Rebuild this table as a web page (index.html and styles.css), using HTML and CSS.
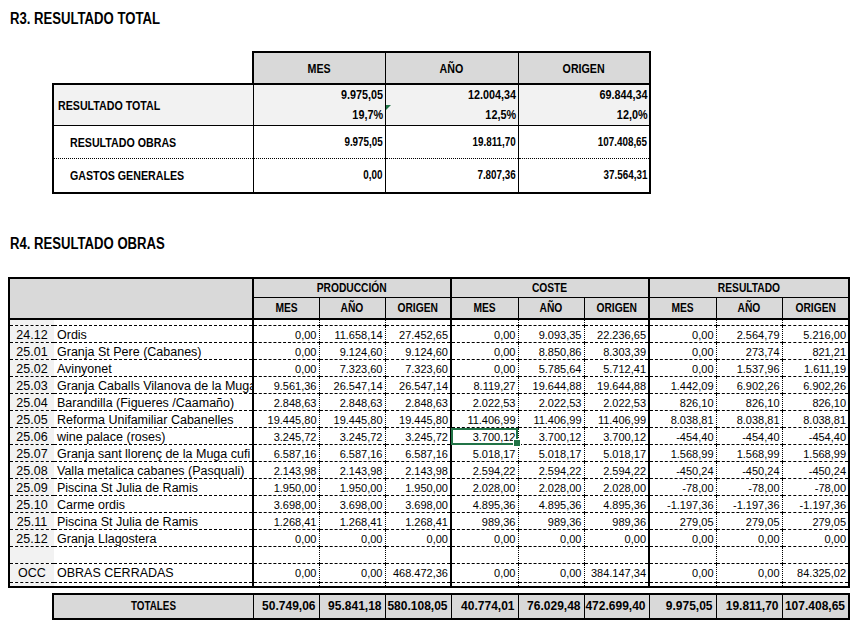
FILE: index.html
```html
<!DOCTYPE html>
<html lang="es">
<head>
  <meta charset="UTF-8">
  <meta name="viewport" content="width=device-width, initial-scale=1.0">
  <title>Resultado</title>
  <link rel="stylesheet" href="styles.css">
</head>
<body>

  <div class="page">

    <!-- R3 -->
    <h2 class="sec-title"><span class="nw">R3. RESULTADO TOTAL</span></h2>
    <table class="tbl-total">
      <colgroup>
        <col class="c-label">
        <col class="c-val">
        <col class="c-val2">
        <col class="c-val">
      </colgroup>
      <thead>
        <tr>
          <th class="blank"></th>
          <th><span class="nw">MES</span></th>
          <th><span class="nw">AÑO</span></th>
          <th><span class="nw">ORIGEN</span></th>
        </tr>
      </thead>
      <tbody>
        <tr class="row-main">
          <td class="lab"><span class="nw">RESULTADO TOTAL</span></td>
          <td class="val"><span class="line">9.975,05</span><span class="line">19,7%</span></td>
          <td class="val flag"><span class="line">12.004,34</span><span class="line">12,5%</span></td>
          <td class="val"><span class="line">69.844,34</span><span class="line">12,0%</span></td>
        </tr>
        <tr class="row-sub">
          <td class="lab sub"><span class="nw">RESULTADO OBRAS</span></td>
          <td class="val"><span class="nw">9.975,05</span></td>
          <td class="val"><span class="nw">19.811,70</span></td>
          <td class="val"><span class="nw">107.408,65</span></td>
        </tr>
        <tr class="row-sub last">
          <td class="lab sub"><span class="nw">GASTOS GENERALES</span></td>
          <td class="val"><span class="nw">0,00</span></td>
          <td class="val"><span class="nw">7.807,36</span></td>
          <td class="val"><span class="nw">37.564,31</span></td>
        </tr>
      </tbody>
    </table>

    <!-- R4 -->
    <h2 class="sec-title r4"><span class="nw">R4. RESULTADO OBRAS</span></h2>
    <table class="tbl-obras">
      <colgroup>
        <col class="c-code"><col class="c-name">
        <col class="c-66"><col class="c-66"><col class="c-66">
        <col class="c-67"><col class="c-66"><col class="c-65">
        <col class="c-67"><col class="c-66"><col class="c-67">
      </colgroup>
      <thead>
        <tr class="h-grp">
          <th class="corner" colspan="2" rowspan="2"></th>
          <th colspan="3"><span class="nw">PRODUCCIÓN</span></th>
          <th colspan="3"><span class="nw">COSTE</span></th>
          <th colspan="3"><span class="nw">RESULTADO</span></th>
        </tr>
        <tr class="h-sub">
          <th><span class="nw">MES</span></th><th><span class="nw">AÑO</span></th><th class="g-end"><span class="nw">ORIGEN</span></th>
          <th><span class="nw">MES</span></th><th><span class="nw">AÑO</span></th><th class="g-end"><span class="nw">ORIGEN</span></th>
          <th><span class="nw">MES</span></th><th><span class="nw">AÑO</span></th><th class="g-end"><span class="nw">ORIGEN</span></th>
        </tr>
      </thead>
      <tbody>
        <tr class="r-gap">
          <td class="code"></td><td class="name"></td>
          <td class="num"></td><td class="num"></td><td class="num g-end"></td>
          <td class="num"></td><td class="num"></td><td class="num g-end"></td>
          <td class="num"></td><td class="num"></td><td class="num g-end"></td>
        </tr>
        <tr>
          <td class="code">24.12</td><td class="name">Ordis</td>
          <td class="num">0,00</td><td class="num">11.658,14</td><td class="num g-end">27.452,65</td>
          <td class="num">0,00</td><td class="num">9.093,35</td><td class="num g-end">22.236,65</td>
          <td class="num">0,00</td><td class="num">2.564,79</td><td class="num g-end">5.216,00</td>
        </tr>
        <tr>
          <td class="code">25.01</td><td class="name">Granja St Pere (Cabanes)</td>
          <td class="num">0,00</td><td class="num">9.124,60</td><td class="num g-end">9.124,60</td>
          <td class="num">0,00</td><td class="num">8.850,86</td><td class="num g-end">8.303,39</td>
          <td class="num">0,00</td><td class="num">273,74</td><td class="num g-end">821,21</td>
        </tr>
        <tr>
          <td class="code">25.02</td><td class="name">Avinyonet</td>
          <td class="num">0,00</td><td class="num">7.323,60</td><td class="num g-end">7.323,60</td>
          <td class="num">0,00</td><td class="num">5.785,64</td><td class="num g-end">5.712,41</td>
          <td class="num">0,00</td><td class="num">1.537,96</td><td class="num g-end">1.611,19</td>
        </tr>
        <tr>
          <td class="code">25.03</td><td class="name">Granja Caballs Vilanova de la Muga</td>
          <td class="num">9.561,36</td><td class="num">26.547,14</td><td class="num g-end">26.547,14</td>
          <td class="num">8.119,27</td><td class="num">19.644,88</td><td class="num g-end">19.644,88</td>
          <td class="num">1.442,09</td><td class="num">6.902,26</td><td class="num g-end">6.902,26</td>
        </tr>
        <tr>
          <td class="code">25.04</td><td class="name">Barandilla (Figueres /Caamaño)</td>
          <td class="num">2.848,63</td><td class="num">2.848,63</td><td class="num g-end">2.848,63</td>
          <td class="num">2.022,53</td><td class="num">2.022,53</td><td class="num g-end">2.022,53</td>
          <td class="num">826,10</td><td class="num">826,10</td><td class="num g-end">826,10</td>
        </tr>
        <tr>
          <td class="code">25.05</td><td class="name">Reforma Unifamiliar Cabanelles</td>
          <td class="num">19.445,80</td><td class="num">19.445,80</td><td class="num g-end">19.445,80</td>
          <td class="num">11.406,99</td><td class="num">11.406,99</td><td class="num g-end">11.406,99</td>
          <td class="num">8.038,81</td><td class="num">8.038,81</td><td class="num g-end">8.038,81</td>
        </tr>
        <tr>
          <td class="code">25.06</td><td class="name">wine palace (roses)</td>
          <td class="num">3.245,72</td><td class="num">3.245,72</td><td class="num g-end">3.245,72</td>
          <td class="num sel">3.700,12</td><td class="num">3.700,12</td><td class="num g-end">3.700,12</td>
          <td class="num">-454,40</td><td class="num">-454,40</td><td class="num g-end">-454,40</td>
        </tr>
        <tr>
          <td class="code">25.07</td><td class="name">Granja sant llorenç de la Muga cufi</td>
          <td class="num">6.587,16</td><td class="num">6.587,16</td><td class="num g-end">6.587,16</td>
          <td class="num">5.018,17</td><td class="num">5.018,17</td><td class="num g-end">5.018,17</td>
          <td class="num">1.568,99</td><td class="num">1.568,99</td><td class="num g-end">1.568,99</td>
        </tr>
        <tr>
          <td class="code">25.08</td><td class="name">Valla metalica cabanes (Pasquali)</td>
          <td class="num">2.143,98</td><td class="num">2.143,98</td><td class="num g-end">2.143,98</td>
          <td class="num">2.594,22</td><td class="num">2.594,22</td><td class="num g-end">2.594,22</td>
          <td class="num">-450,24</td><td class="num">-450,24</td><td class="num g-end">-450,24</td>
        </tr>
        <tr>
          <td class="code">25.09</td><td class="name">Piscina St Julia de Ramis</td>
          <td class="num">1.950,00</td><td class="num">1.950,00</td><td class="num g-end">1.950,00</td>
          <td class="num">2.028,00</td><td class="num">2.028,00</td><td class="num g-end">2.028,00</td>
          <td class="num">-78,00</td><td class="num">-78,00</td><td class="num g-end">-78,00</td>
        </tr>
        <tr>
          <td class="code">25.10</td><td class="name">Carme ordis</td>
          <td class="num">3.698,00</td><td class="num">3.698,00</td><td class="num g-end">3.698,00</td>
          <td class="num">4.895,36</td><td class="num">4.895,36</td><td class="num g-end">4.895,36</td>
          <td class="num">-1.197,36</td><td class="num">-1.197,36</td><td class="num g-end">-1.197,36</td>
        </tr>
        <tr>
          <td class="code">25.11</td><td class="name">Piscina St Julia de Ramis</td>
          <td class="num">1.268,41</td><td class="num">1.268,41</td><td class="num g-end">1.268,41</td>
          <td class="num">989,36</td><td class="num">989,36</td><td class="num g-end">989,36</td>
          <td class="num">279,05</td><td class="num">279,05</td><td class="num g-end">279,05</td>
        </tr>
        <tr>
          <td class="code">25.12</td><td class="name">Granja Llagostera</td>
          <td class="num">0,00</td><td class="num">0,00</td><td class="num g-end">0,00</td>
          <td class="num">0,00</td><td class="num">0,00</td><td class="num g-end">0,00</td>
          <td class="num">0,00</td><td class="num">0,00</td><td class="num g-end">0,00</td>
        </tr>
        <tr>
          <td class="code"></td><td class="name"></td>
          <td class="num"></td><td class="num"></td><td class="num g-end"></td>
          <td class="num"></td><td class="num"></td><td class="num g-end"></td>
          <td class="num"></td><td class="num"></td><td class="num g-end"></td>
        </tr>
        <tr class="r-occ">
          <td class="code">OCC</td><td class="name">OBRAS CERRADAS</td>
          <td class="num">0,00</td><td class="num">0,00</td><td class="num g-end">468.472,36</td>
          <td class="num">0,00</td><td class="num">0,00</td><td class="num g-end">384.147,34</td>
          <td class="num">0,00</td><td class="num">0,00</td><td class="num g-end">84.325,02</td>
        </tr>
        <tr class="r-end">
          <td class="code"></td><td class="name"></td>
          <td class="num"></td><td class="num"></td><td class="num g-end"></td>
          <td class="num"></td><td class="num"></td><td class="num g-end"></td>
          <td class="num"></td><td class="num"></td><td class="num g-end"></td>
        </tr>
      </tbody>
    </table>

    <!-- totales -->
    <table class="tbl-totales">
      <colgroup>
        <col class="c-label">
        <col class="c-66"><col class="c-66"><col class="c-66">
        <col class="c-67"><col class="c-66"><col class="c-65">
        <col class="c-67"><col class="c-66"><col class="c-67">
      </colgroup>
      <tbody>
        <tr>
          <td class="lab"><span class="nw">TOTALES</span></td>
          <td class="num">50.749,06</td><td class="num">95.841,18</td><td class="num">580.108,05</td>
          <td class="num">40.774,01</td><td class="num">76.029,48</td><td class="num">472.699,40</td>
          <td class="num">9.975,05</td><td class="num">19.811,70</td><td class="num">107.408,65</td>
        </tr>
      </tbody>
    </table>

  </div>

</body>
</html>
```

FILE: styles.css
```css
/* reset */
* {
  padding: 0;
  margin: 0;
  box-sizing: border-box;
}
body {
  background-color: #FFFFFF;
  color: #000;
  font-family: "Liberation Sans", Arial, sans-serif;
}

.page {
  padding-top: 10px;
}

/* Arial Narrow no existe: Arial negrita estrechada */
.nw {
  display: inline-block;
  transform: scaleX(0.82);
  white-space: nowrap;
}

/* titulos de seccion */
.sec-title {
  margin-left: 10px;
  font-size: 16px;
  line-height: 18px;
  font-weight: bold;
}
.sec-title .nw {
  transform-origin: left center;
}
.sec-title.r4 {
  margin-top: 41px;
}

/* ---------- R3 ---------- */
.tbl-total {
  margin: 23px 0 0 52px;
  width: 597px;
  table-layout: fixed;
  border-collapse: collapse;
  font-size: 13px;
  font-weight: bold;
}
.tbl-total .c-label { width: 200px; }
.tbl-total .c-val { width: 132px; }
.tbl-total .c-val2 { width: 133px; }

.tbl-total th {
  height: 32px;
  background-color: #D9D9D9;
  border: 1px solid #000;
  border-top-width: 2px;
  border-bottom-width: 2px;
}
.tbl-total th:nth-child(2) { border-left-width: 2px; }
.tbl-total th:last-child { border-right-width: 2px; }
.tbl-total th.blank {
  background: none;
  border-top: 0;
  border-left: 0;
}

.tbl-total td {
  border-left: 1px solid #000;
}
.tbl-total td:first-child { border-left-width: 2px; }
.tbl-total td:last-child { border-right: 2px solid #000; }

.tbl-total .row-main td {
  height: 41px;
  background-color: #F2F2F2;
  border-top: 2px solid #000;
  border-bottom: 1px solid #000;
}
.tbl-total .row-sub td {
  height: 33px;
  border-bottom: 1px dotted #000;
}
.tbl-total .row-sub.last td {
  height: 34px;
  border-bottom: 2px solid #000;
}
.tbl-total .lab {
  padding-left: 4px;
}
.tbl-total .lab .nw {
  transform-origin: left center;
}
.tbl-total .lab.sub {
  padding-left: 16px;
}
.tbl-total .val {
  text-align: right;
  padding-right: 2px;
  font-size: 12px;
}
.tbl-total .val .nw {
  transform-origin: right center;
}
.tbl-total .line {
  display: block;
  line-height: 20px;
  font-size: 12px;
  transform: scaleX(0.9);
  transform-origin: right center;
}
/* triangulo verde de aviso de excel */
.tbl-total .flag {
  position: relative;
}
.tbl-total .flag::before {
  content: '';
  position: absolute;
  top: 20px;
  left: 0;
  border-top: 5px solid #217346;
  border-right: 5px solid transparent;
}

/* ---------- R4 ---------- */
.tbl-obras {
  margin: 24px 0 0 8px;
  width: 840px;
  table-layout: fixed;
  border-collapse: collapse;
  font-size: 11px;
}
.c-code { width: 45px; }
.c-name { width: 199px; }
.c-65 { width: 65px; }
.c-66 { width: 66px; }
.c-67 { width: 67px; }

.tbl-obras th {
  background-color: #D9D9D9;
  font-weight: bold;
  font-size: 12.5px;
  border: 1px solid #000;
}
.tbl-obras .h-grp th {
  height: 20px;
  border: 2px solid #000;
  border-bottom-width: 1px;
}
.tbl-obras .h-grp th.corner {
  border-bottom-width: 2px;
}
.tbl-obras .h-sub th {
  height: 21px;
  border-bottom-width: 2px;
}
.tbl-obras th.g-end { border-right-width: 2px; }

.tbl-obras td {
  height: 17px;
  line-height: 14px;
  vertical-align: bottom;
  border-bottom: 1px dashed #000;
  white-space: nowrap;
  overflow: hidden;
}
.tbl-obras .code {
  background-color: #F2F2F2;
  border-left: 2px solid #000;
  text-align: center;
  font-size: 12.5px;
}
.tbl-obras .name {
  padding-left: 3px;
  border-right: 2px solid #000;
  font-size: 12.5px;
}
.tbl-obras .num {
  text-align: right;
  padding-right: 2px;
  border-right: 1px dotted #000;
}
.tbl-obras .num.g-end { border-right: 2px solid #000; }

.tbl-obras .r-gap td { height: 7px; }
.tbl-obras .r-occ td {
  height: 19px;
  padding-bottom: 2px;
}
.tbl-obras .r-end td {
  height: 4px;
  border-bottom: 2px solid #000;
}

/* celda seleccionada */
.tbl-obras .sel {
  position: relative;
  overflow: visible;
  outline: 2px solid #217346;
  outline-offset: -2px;
}
.tbl-obras .sel::after {
  content: '';
  position: absolute;
  right: -3px;
  bottom: -3px;
  width: 6px;
  height: 6px;
  background-color: #217346;
  border: 1px solid #fff;
}

/* ---------- totales ---------- */
.tbl-totales {
  margin: 5px 0 0 52px;
  width: 796px;
  table-layout: fixed;
  border-collapse: collapse;
  background-color: #D9D9D9;
}
.tbl-totales .c-label { width: 200px; }
.tbl-totales td {
  height: 25px;
  border: 1px solid #000;
  border-top-width: 2px;
  border-bottom-width: 2px;
  font-weight: bold;
  font-size: 12px;
}
.tbl-totales td:first-child { border-left-width: 2px; }
.tbl-totales td:last-child { border-right-width: 2px; }
.tbl-totales .lab {
  text-align: center;
  font-size: 12px;
}
.tbl-totales .num {
  text-align: right;
  padding-right: 3px;
}
```
